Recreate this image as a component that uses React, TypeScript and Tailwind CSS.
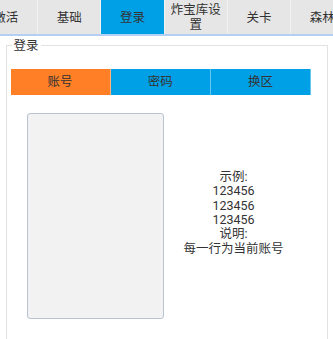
const tabs = ['激活', '基础', '登录', '炸宝库设置', '关卡', '森林'];
const subTabs = ['账号', '密码', '换区'];
const hint = ['示例:', '123456', '123456', '123456', '说明:', '每一行为当前账号'];

export default function App() {
  return (
    <div
      className="h-[339px] w-[333px] overflow-hidden bg-white text-[12.5px] text-[#333]"
      style={{ fontFamily: 'Roboto, "Noto Sans CJK SC", sans-serif' }}
    >
      <div className="flex h-[34px] overflow-hidden bg-[#e6e6e6]">
        {tabs.map((t, i) => (
          <div
            key={t}
            className={`flex w-[63.3px] shrink-0 items-center justify-center px-[6px] text-center leading-[15px] border-r border-[#f2f2f2] ${
              i === 0 ? '-ml-[25.3px]' : ''
            } ${i === 2 ? 'bg-[#00a0e6]' : ''}`}
          >
            {t}
          </div>
        ))}
      </div>
      <div className="h-[2px] bg-[#b3cff2]" />

      <fieldset className="mx-[5.5px] mt-[1px] h-[330px] border border-[#e2e2e2] p-0">
        <legend className="ml-[5px] px-[2px] leading-[17px]">登录</legend>

        <div className="ml-[4px] mt-[15px] flex w-[300.5px]">
          {subTabs.map((t, i) => (
            <div
              key={t}
              className={`flex h-[26px] flex-1 items-center justify-center border-r border-white/40 ${
                i === 0 ? 'bg-[#ff7f27]' : 'bg-[#00a0e6]'
              }`}
            >
              {t}
            </div>
          ))}
        </div>

        <div className="mt-[18px] flex">
          <div className="ml-[20.5px] h-[206px] w-[136.5px] rounded-[3px] border-[1.5px] border-[#b8c4d4] bg-[#f2f2f2]" />
          <div className="flex w-[140px] flex-col items-center justify-center pb-[6px] leading-[14.3px]">
            {hint.map((l, i) => (
              <div key={i}>{l}</div>
            ))}
          </div>
        </div>
      </fieldset>
    </div>
  );
}
